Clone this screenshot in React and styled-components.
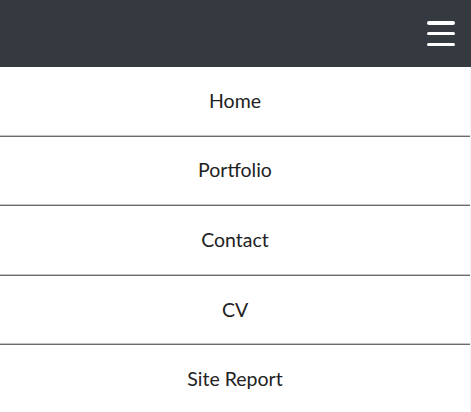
import React from "react";
import styled, { createGlobalStyle } from "styled-components";

const GlobalStyle = createGlobalStyle`
  html, body {
    margin: 0;
    padding: 0;
    background: #f5f6f8;
    font-family: Lato, "Noto Sans", sans-serif;
  }
`;

const Page = styled.div`
  width: 471px;
  height: 412px;
  overflow: hidden;
  background: #f5f6f8;
`;

const TopBar = styled.header`
  height: 67px;
  background: #343a40;
  display: flex;
  justify-content: flex-end;
  align-items: center;
  padding-right: 16px;
  box-sizing: border-box;
`;

const Burger = styled.button`
  width: 28px;
  height: 25px;
  padding: 0;
  border: none;
  background: transparent;
  display: flex;
  flex-direction: column;
  justify-content: space-between;
  cursor: pointer;

  span {
    display: block;
    height: 3.5px;
    border-radius: 2px;
    background: #ffffff;
  }
`;

const Menu = styled.nav`
  width: 470px;
  background: #ffffff;
  display: flex;
  flex-direction: column;
`;

const MenuItem = styled.a`
  height: 69.6px;
  box-sizing: border-box;
  padding-bottom: 2px;
  display: flex;
  align-items: center;
  justify-content: center;
  font-size: 19.5px;
  color: #222222;
  text-decoration: none;
  border-bottom: 1px solid ${(p) => (p.$last ? "#e2e2e2" : "#6b6b6b")};
  box-shadow: ${(p) => (p.$last ? "none" : "0 -1px 0 #c4c4c4 inset")};
`;

const items = ["Home", "Portfolio", "Contact", "CV", "Site Report"];

export default function App() {
  return (
    <Page>
      <GlobalStyle />
      <TopBar>
        <Burger aria-label="menu">
          <span />
          <span />
          <span />
        </Burger>
      </TopBar>
      <Menu>
        {items.map((label, i) => (
          <MenuItem key={label} href="#" $last={i === items.length - 1}>
            {label}
          </MenuItem>
        ))}
      </Menu>
    </Page>
  );
}
